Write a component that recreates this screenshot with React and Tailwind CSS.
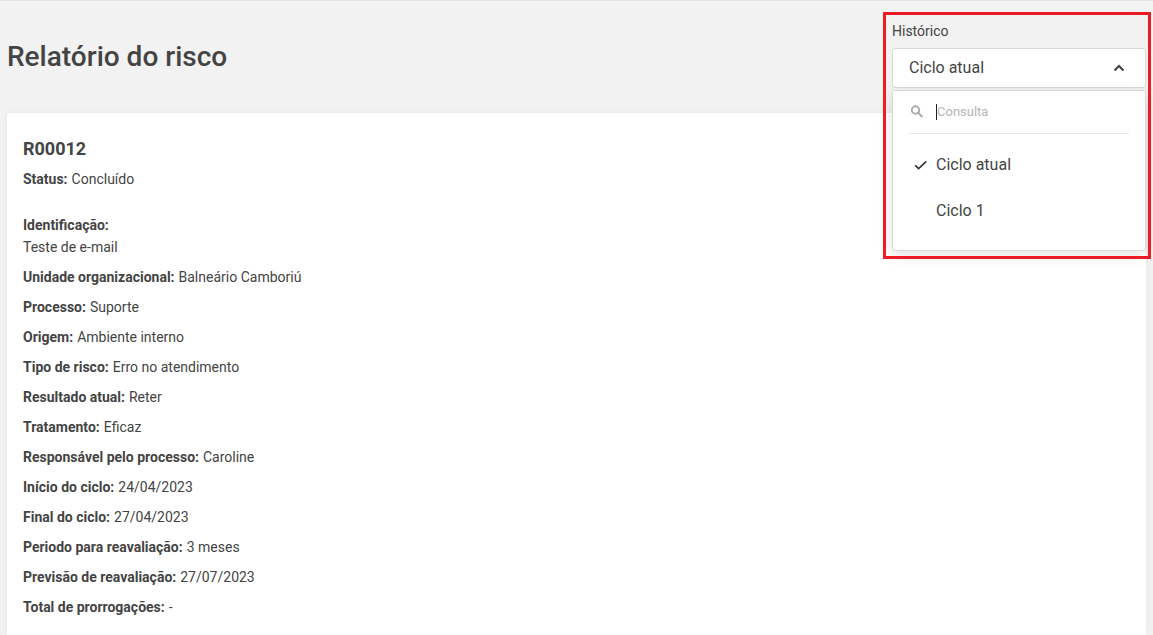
import { useState } from "react";

const details = [
  ["Unidade organizacional:", "Balneário Camboriú"],
  ["Processo:", "Suporte"],
  ["Origem:", "Ambiente interno"],
  ["Tipo de risco:", "Erro no atendimento"],
  ["Resultado atual:", "Reter"],
  ["Tratamento:", "Eficaz"],
  ["Responsável pelo processo:", "Caroline"],
  ["Início do ciclo:", "24/04/2023"],
  ["Final do ciclo:", "27/04/2023"],
  ["Periodo para reavaliação:", "3 meses"],
  ["Previsão de reavaliação:", "27/07/2023"],
  ["Total de prorrogações:", "-"],
];

const cycles = ["Ciclo atual", "Ciclo 1"];

function Detail({ label, value }) {
  return (
    <div className="flex gap-1">
      <dt className="font-bold">{label}</dt>
      <dd>{value}</dd>
    </div>
  );
}

function SearchIcon() {
  return (
    <svg viewBox="0 0 16 16" className="size-4 shrink-0 fill-none stroke-[#adadad]" strokeWidth="2" aria-hidden="true">
      <circle cx="6.500" cy="6" r="3.700" />
      <path d="M9.200 8.800 13.500 13" />
    </svg>
  );
}

function CheckIcon() {
  return (
    <svg viewBox="0 0 16 16" className="size-4 fill-none stroke-[#333]" strokeWidth="1.7" aria-hidden="true">
      <path d="M2.200 8.300 5.600 11.500 13.300 4.300" />
    </svg>
  );
}

function ChevronUp() {
  return (
    <svg viewBox="0 0 16 16" className="size-4 fill-none stroke-[#404040]" strokeWidth="2" aria-hidden="true">
      <path d="M3.500 10.500 8 6 12.500 10.500" />
    </svg>
  );
}

function HistorySelect() {
  const [selected, setSelected] = useState(cycles[0]);
  const [query, setQuery] = useState("");
  const visible = cycles.filter((c) => c.toLowerCase().includes(query.toLowerCase()));

  return (
    <div className="relative mt-[19px] w-[254px] shrink-0">
      <label htmlFor="history" className="mb-1.5 block text-sm leading-[22px]">
        Histórico
      </label>
      <button
        id="history"
        type="button"
        aria-haspopup="listbox"
        aria-expanded="true"
        className="flex h-10 w-full items-center justify-between rounded-[3px] border border-[#d9d9d9] bg-white pr-[18px] pl-4 text-base"
      >
        {selected}
        <ChevronUp />
      </button>
      <div className="absolute inset-x-0 top-full z-10 mt-0.5 rounded-[3px] border border-[#d9d9d9] bg-white px-4 pb-4 shadow-[0_4px_16px_rgba(0,0,0,0.12)]">
        <div className="flex h-[43px] items-center border-b border-[#e5e5e5]">
          <SearchIcon />
          <input
            type="text"
            aria-label="Consulta"
            placeholder="Consulta"
            value={query}
            onChange={(e) => setQuery(e.target.value)}
            className="ml-[11px] h-4 w-full min-w-0 border-l border-[#222] text-[13px] outline-none placeholder:text-[#b5b5b5]"
          />
        </div>
        <ul role="listbox" aria-label="Histórico" className="pt-2">
          {visible.map((cycle) => (
            <li
              key={cycle}
              role="option"
              aria-selected={cycle === selected}
              onClick={() => setSelected(cycle)}
              className="flex h-[46px] items-center text-base"
            >
              <span className="w-[27px] pl-1">{cycle === selected && <CheckIcon />}</span>
              {cycle}
            </li>
          ))}
        </ul>
      </div>
      <div className="pointer-events-none absolute -top-2 -right-[5px] -left-[9px] z-20 h-[247px] border-3 border-[#ed1c24]" />
    </div>
  );
}

export default function App() {
  return (
    <div className="flex min-h-screen flex-col border-t border-[#e2e2e2] bg-[#f2f2f2] px-[7px] font-[Roboto,sans-serif] text-[#444]">
      <header className="flex min-h-28 items-start justify-between">
        <h1 className="mt-9 text-[28px] leading-10 font-medium">Relatório do risco</h1>
        <HistorySelect />
      </header>
      <main className="flex-1 rounded-t-[3px] bg-white px-4 pt-6 pb-4 text-sm leading-[22px] shadow-[0_0_6px_rgba(0,0,0,0.06)]">
        <h2 className="mb-[7px] text-lg leading-6 font-bold">R00012</h2>
        <dl className="flex flex-col gap-2">
          <Detail label="Status:" value="Concluído" />
          <div className="mt-4">
            <dt className="font-bold">Identificação:</dt>
            <dd>Teste de e-mail</dd>
          </div>
          {details.map(([label, value]) => (
            <Detail key={label} label={label} value={value} />
          ))}
        </dl>
      </main>
    </div>
  );
}
